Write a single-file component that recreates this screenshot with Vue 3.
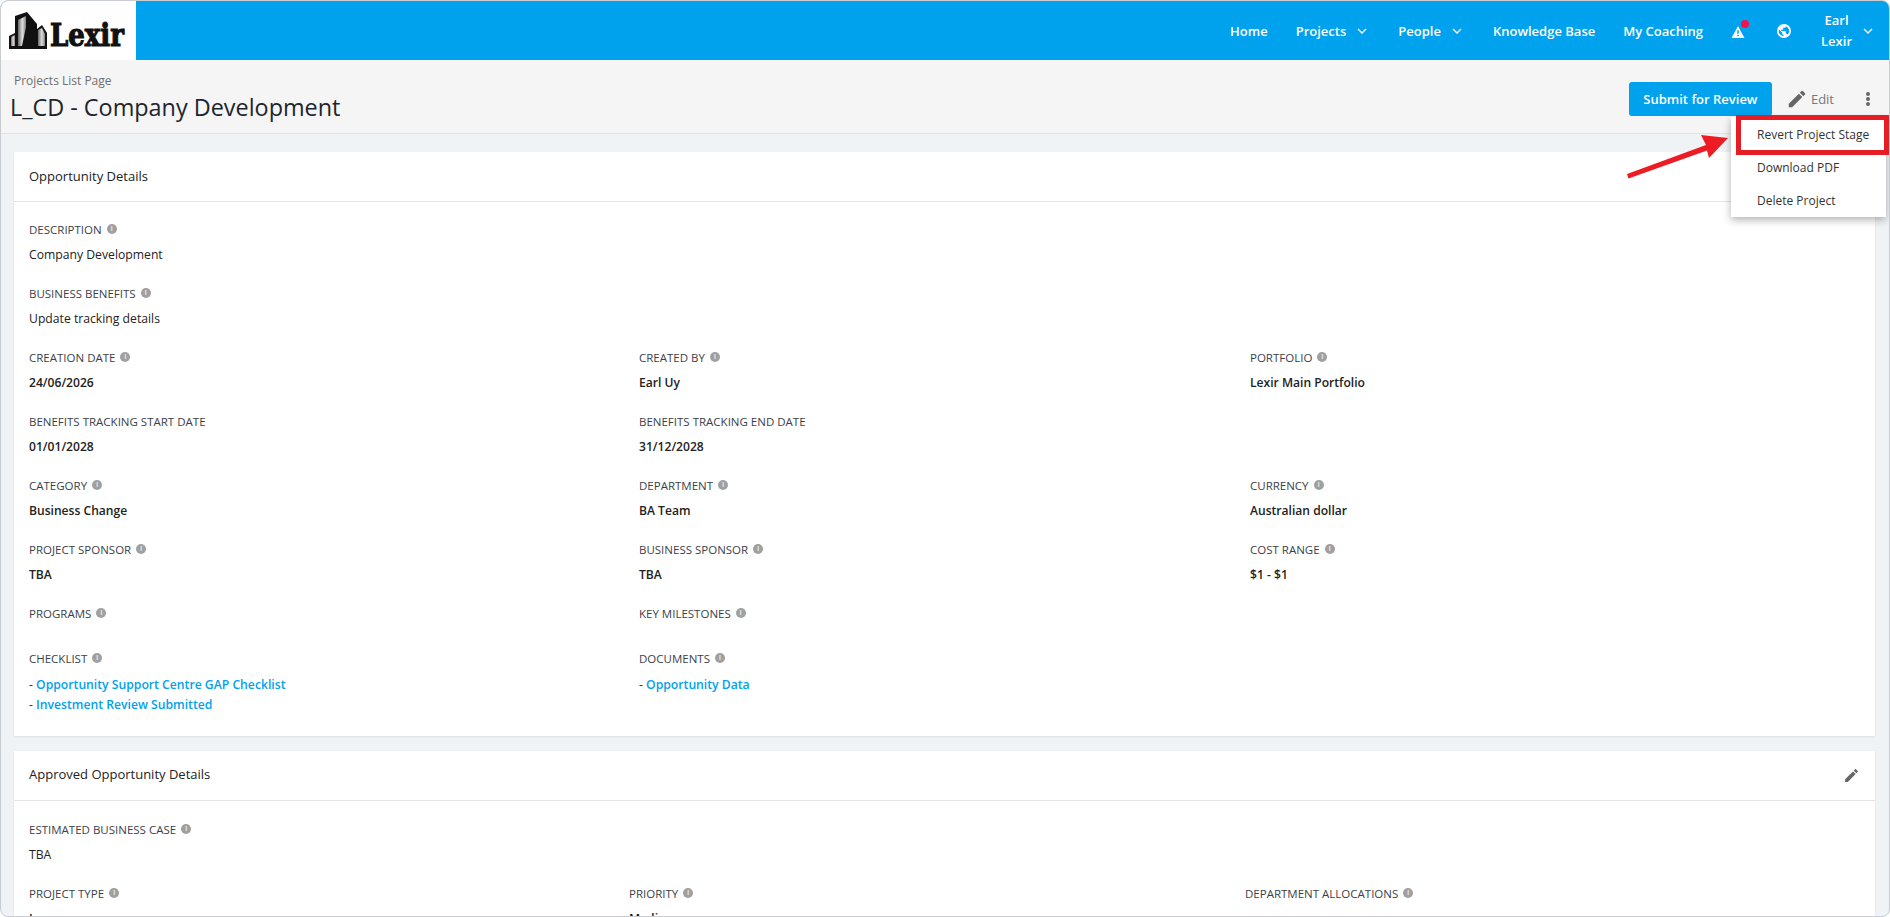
<script setup>
const nav = [
  { label: 'Home' },
  { label: 'Projects', caret: true },
  { label: 'People', caret: true },
  { label: 'Knowledge Base' },
  { label: 'My Coaching' },
]

// rows of the first card
const detailRows = [
  [
    { label: 'Creation Date', value: '24/06/2026' },
    { label: 'Created By', value: 'Earl Uy' },
    { label: 'Portfolio', value: 'Lexir Main Portfolio' },
  ],
  [
    { label: 'Benefits Tracking Start Date', value: '01/01/2028', noInfo: true },
    { label: 'Benefits Tracking End Date', value: '31/12/2028', noInfo: true },
  ],
  [
    { label: 'Category', value: 'Business Change' },
    { label: 'Department', value: 'BA Team' },
    { label: 'Currency', value: 'Australian dollar' },
  ],
  [
    { label: 'Project Sponsor', value: 'TBA' },
    { label: 'Business Sponsor', value: 'TBA' },
    { label: 'Cost Range', value: '$1 - $1' },
  ],
]

const menu = ['Revert Project Stage', 'Download PDF', 'Delete Project']
</script>

<template>
  <div class="frame">
    <header class="topbar">
      <div class="logo">
        <svg class="logo-mark" width="38" height="37" viewBox="0 0 38 37">
          <defs>
            <linearGradient id="tower" x1="0" x2="1" y1="0" y2="0">
              <stop offset="0" stop-color="#6a6a6a" />
              <stop offset="0.55" stop-color="#dedede" />
              <stop offset="1" stop-color="#808080" />
            </linearGradient>
          </defs>
          <path d="M6 4 L18 0 L28 12 V17 L33 13 L38 21 V37 H0 V24 L6 21 Z" fill="#111" />
          <path d="M9 8 L17 4 V15 L13 34 H9 Z" fill="url(#tower)" />
          <path d="M2 25 L6 23 V34 H2 Z" fill="url(#tower)" />
          <path d="M29 18 L33 16 L36 22 V34 H29 Z" fill="url(#tower)" />
        </svg>
        <span class="logo-text">Lexir</span>
      </div>
      <nav class="nav">
        <a
          v-for="item in nav"
          :key="item.label"
          class="nav-item"
          :class="{ 'has-caret': item.caret }"
        >
          {{ item.label }}
          <svg v-if="item.caret" class="caret" width="10" height="6" viewBox="0 0 10 6">
            <path d="M1 1 L5 5 L9 1" fill="none" stroke="#fff" stroke-width="1.3" />
          </svg>
        </a>
        <span class="alert">
          <svg width="14" height="12" viewBox="0 0 14 13">
            <path fill-rule="evenodd" d="M7 0 L14 13 H0 Z M6.2 4.500 V8.500 H7.800 V4.500 Z M6.200 9.600 V11.200 H7.800 V9.600 Z" fill="#fff" />
          </svg>
          <i class="alert-dot"></i>
        </span>
        <svg class="globe" width="14" height="14" viewBox="0 0 24 24">
          <path fill="#fff" d="M12 0a12 12 0 1 0 0 24 12 12 0 0 0 0-24zM3 12c0-.9.1-1.700.4-2.500l5.600 5.600v1.200c0 1.300 1 2.300 2.300 2.300v2.200C6.700 20.300 3 16.600 3 12zm15.300 6.200c-.3-.9-1.100-1.500-2.100-1.500h-1.100v-3.400c0-.6-.5-1.100-1.100-1.100H7.200v-2.300h2.300c.6 0 1.100-.5 1.100-1.100V6.500h2.300c1.300 0 2.300-1 2.300-2.300v-.5c3.300 1.300 5.700 4.600 5.700 8.300 0 2.400-.9 4.600-2.600 6.200z" />
        </svg>
        <div class="user">
          <span class="user-name">Earl<br />Lexir</span>
          <svg class="caret" width="10" height="6" viewBox="0 0 10 6">
            <path d="M1 1 L5 5 L9 1" fill="none" stroke="#fff" stroke-width="1.3" />
          </svg>
        </div>
      </nav>
    </header>

    <section class="pagehead">
      <div>
        <div class="crumb">Projects List Page</div>
        <h1 class="title">L_CD - Company Development</h1>
      </div>
      <div class="actions">
        <button class="submit">Submit for Review</button>
        <span class="edit">
          <svg width="22" height="22" viewBox="0 0 24 24">
            <path fill="#666" d="M3 17.250V21h3.750L17.810 9.940l-3.750-3.750L3 17.250zM20.710 7.040a1 1 0 0 0 0-1.410l-2.340-2.340a1 1 0 0 0-1.410 0l-1.830 1.830 3.750 3.750 1.830-1.830z" />
          </svg>
          Edit
        </span>
        <span class="kebab"><i></i><i></i><i></i></span>
      </div>
      <ul class="menu">
        <li v-for="m in menu" :key="m">{{ m }}</li>
      </ul>
    </section>

    <main class="content">
      <article class="card">
        <div class="card-head">Opportunity Details</div>
        <div class="card-body">
          <div class="field">
            <div class="label">Description <i class="info">i</i></div>
            <div class="value plain">Company Development</div>
          </div>
          <div class="field">
            <div class="label">Business Benefits <i class="info">i</i></div>
            <div class="value plain">Update tracking details</div>
          </div>
          <div v-for="(row, r) in detailRows" :key="r" class="row">
            <div v-for="f in row" :key="f.label" class="field">
              <div class="label">{{ f.label }} <i v-if="!f.noInfo" class="info">i</i></div>
              <div class="value">{{ f.value }}</div>
            </div>
          </div>
          <div class="row short">
            <div class="field">
              <div class="label">Programs <i class="info">i</i></div>
            </div>
            <div class="field">
              <div class="label">Key Milestones <i class="info">i</i></div>
            </div>
          </div>
          <div class="row">
            <div class="field">
              <div class="label">Checklist <i class="info">i</i></div>
              <div class="links">
                <div>- <a>Opportunity Support Centre GAP Checklist</a></div>
                <div>- <a>Investment Review Submitted</a></div>
              </div>
            </div>
            <div class="field">
              <div class="label">Documents <i class="info">i</i></div>
              <div class="links">
                <div>- <a>Opportunity Data</a></div>
              </div>
            </div>
          </div>
        </div>
      </article>

      <article class="card second">
        <div class="card-head">
          Approved Opportunity Details
          <svg class="card-edit" width="17" height="17" viewBox="0 0 24 24">
            <path fill="#666" d="M3 17.250V21h3.750L17.810 9.940l-3.750-3.750L3 17.250zM20.710 7.040a1 1 0 0 0 0-1.410l-2.340-2.340a1 1 0 0 0-1.410 0l-1.830 1.830 3.750 3.750 1.830-1.830z" />
          </svg>
        </div>
        <div class="card-body">
          <div class="field">
            <div class="label">Estimated Business Case <i class="info">i</i></div>
            <div class="value plain">TBA</div>
          </div>
          <div class="row wide">
            <div class="field">
              <div class="label">Project Type <i class="info">i</i></div>
              <div class="value">Lean</div>
            </div>
            <div class="field">
              <div class="label">Priority <i class="info">i</i></div>
              <div class="value">Medium</div>
            </div>
            <div class="field">
              <div class="label">Department Allocations <i class="info">i</i></div>
            </div>
          </div>
        </div>
      </article>
    </main>

    <!-- annotation drawn over the screenshot -->
    <div class="callout"></div>
    <svg class="arrow" width="110" height="50" viewBox="0 0 110 50">
      <path d="M1 43 L80 14 L75 4 L102 7 L83 27 L81 19.500 L2.500 47.500 Z" fill="#ed1c24" />
    </svg>
  </div>
</template>

<style>
html, body {
  margin: 0;
  background: #fff;
}
</style>

<style scoped>
.frame {
  position: relative;
  height: 917px;
  box-sizing: border-box;
  overflow: hidden;
  border: 1px solid #c9cdd1;
  border-radius: 8px;
  background: #f0f3f6;
  font-family: "Open Sans", sans-serif;
  font-size: 12px;
  color: #2b2b2b;
}

.topbar {
  display: flex;
  justify-content: space-between;
  align-items: stretch;
  height: 59px;
  background: #00a2ed;
  color: #fff;
}

.logo {
  display: flex;
  align-items: flex-end;
  width: 135px;
  background: #fff;
  padding: 0 0 11px 8px;
  box-sizing: border-box;
}

.logo-mark {
  flex-shrink: 0;
}

.logo-text {
  display: block;
  margin-left: 3px;
  font-family: "DejaVu Serif", serif;
  font-weight: 700;
  font-size: 26px;
  line-height: 24px;
  color: #111;
  -webkit-text-stroke: 1px #111;
  transform: scaleY(1.2);
  transform-origin: 0 82%;
}

.nav {
  display: flex;
  align-items: center;
  padding-right: 16px;
  font-size: 13px;
  font-weight: 600;
}

.nav-item {
  display: flex;
  align-items: center;
  margin-right: 28px;
  white-space: nowrap;
}

.nav-item.has-caret {
  margin-right: 31px;
}

.caret {
  margin-left: 11px;
}

.alert {
  position: relative;
  display: flex;
  margin: 2px 32px 0 0;
}

.alert-dot {
  position: absolute;
  top: -6px;
  right: -4px;
  width: 8px;
  height: 8px;
  border-radius: 50%;
  background: #f2134c;
}

.globe {
  margin-right: 30px;
}

.user {
  display: flex;
  align-items: center;
}

.user-name {
  text-align: center;
  line-height: 21px;
  font-size: 13px;
}

.pagehead {
  position: relative;
  display: flex;
  justify-content: space-between;
  height: 74px;
  box-sizing: border-box;
  padding: 12px 19px 0 9px;
  background: #f5f5f5;
  border-bottom: 1px solid #dfe3e7;
}

.crumb {
  padding-left: 4px;
  font-size: 12px;
  line-height: 17px;
  color: #6f6f6f;
}

.title {
  margin: 2px 0 0;
  font-size: 23.4px;
  line-height: 32px;
  font-weight: 400;
  color: #1d2530;
}

.actions {
  display: flex;
  align-items: flex-start;
  padding-top: 10px;
}

.submit {
  width: 143px;
  height: 34px;
  border: 0;
  border-radius: 3px;
  background: #00a2ed;
  color: #fff;
  font: 600 13px "Open Sans", sans-serif;
}

.edit {
  display: flex;
  align-items: center;
  gap: 3px;
  height: 34px;
  margin-left: 14px;
  color: #777;
  font-size: 13px;
}

.kebab {
  display: flex;
  flex-direction: column;
  justify-content: center;
  gap: 1px;
  height: 34px;
  margin-left: 32px;
}

.kebab i {
  width: 4px;
  height: 4px;
  border-radius: 50%;
  background: #666;
}

.menu {
  position: absolute;
  z-index: 3;
  top: 57px;
  right: 3px;
  width: 155px;
  margin: 0;
  padding: 1px 0 0;
  list-style: none;
  background: #fff;
  box-shadow: 0 3px 8px rgba(0, 0, 0, 0.3);
  font-size: 12px;
  color: #333;
}

.menu li {
  height: 33px;
  line-height: 33px;
  padding-left: 26px;
}

.content {
  padding: 18px 14px 0 13px;
}

.card {
  background: #fff;
  box-shadow: 0 1px 2px rgba(0, 0, 0, 0.08);
}

.second {
  margin-top: 15px;
}

.card-head {
  display: flex;
  justify-content: space-between;
  align-items: center;
  height: 50px;
  box-sizing: border-box;
  padding: 0 15px 2px 15px;
  border-bottom: 1px solid #e2e4e6;
  font-size: 13px;
  color: #222;
}

.second .card-head {
  padding-bottom: 4px;
}

.card-edit {
  margin-top: 4px;
}

.card-body {
  padding: 19px 15px 0;
  height: 534px;
  box-sizing: border-box;
}

.second .card-body {
  padding-top: 20px;
}

.field {
  min-height: 64px;
}

.row {
  display: grid;
  grid-template-columns: 610px 611px 1fr;
}

.row.short .field {
  min-height: 45px;
}

.row.wide {
  grid-template-columns: 600px 616px 1fr;
}

.label {
  font-size: 11.5px;
  line-height: 18px;
  text-transform: uppercase;
  color: #3a3f4a;
}

.info {
  display: inline-block;
  position: relative;
  top: -3px;
  width: 10px;
  height: 10px;
  margin-left: 2px;
  border-radius: 50%;
  background: #a0a0a0;
  color: #e4e4e4;
  font-size: 7px;
  line-height: 10px;
  font-style: normal;
  font-weight: 700;
  text-align: center;
}

.value {
  margin-top: 7px;
  font-size: 12.1px;
  line-height: 17px;
  font-weight: 600;
  color: #222;
}

.value.plain {
  font-size: 12.2px;
  font-weight: 400;
}

.links {
  margin-top: 7px;
  font-size: 12.2px;
  line-height: 20px;
  color: #333;
}

.links a {
  color: #00a2ed;
  font-weight: 600;
}

.callout {
  position: absolute;
  z-index: 4;
  left: 1735px;
  top: 114px;
  width: 153px;
  height: 40px;
  box-sizing: border-box;
  border: 5px solid #e71d25;
}

.arrow {
  position: absolute;
  z-index: 4;
  left: 1625px;
  top: 130px;
}
</style>
